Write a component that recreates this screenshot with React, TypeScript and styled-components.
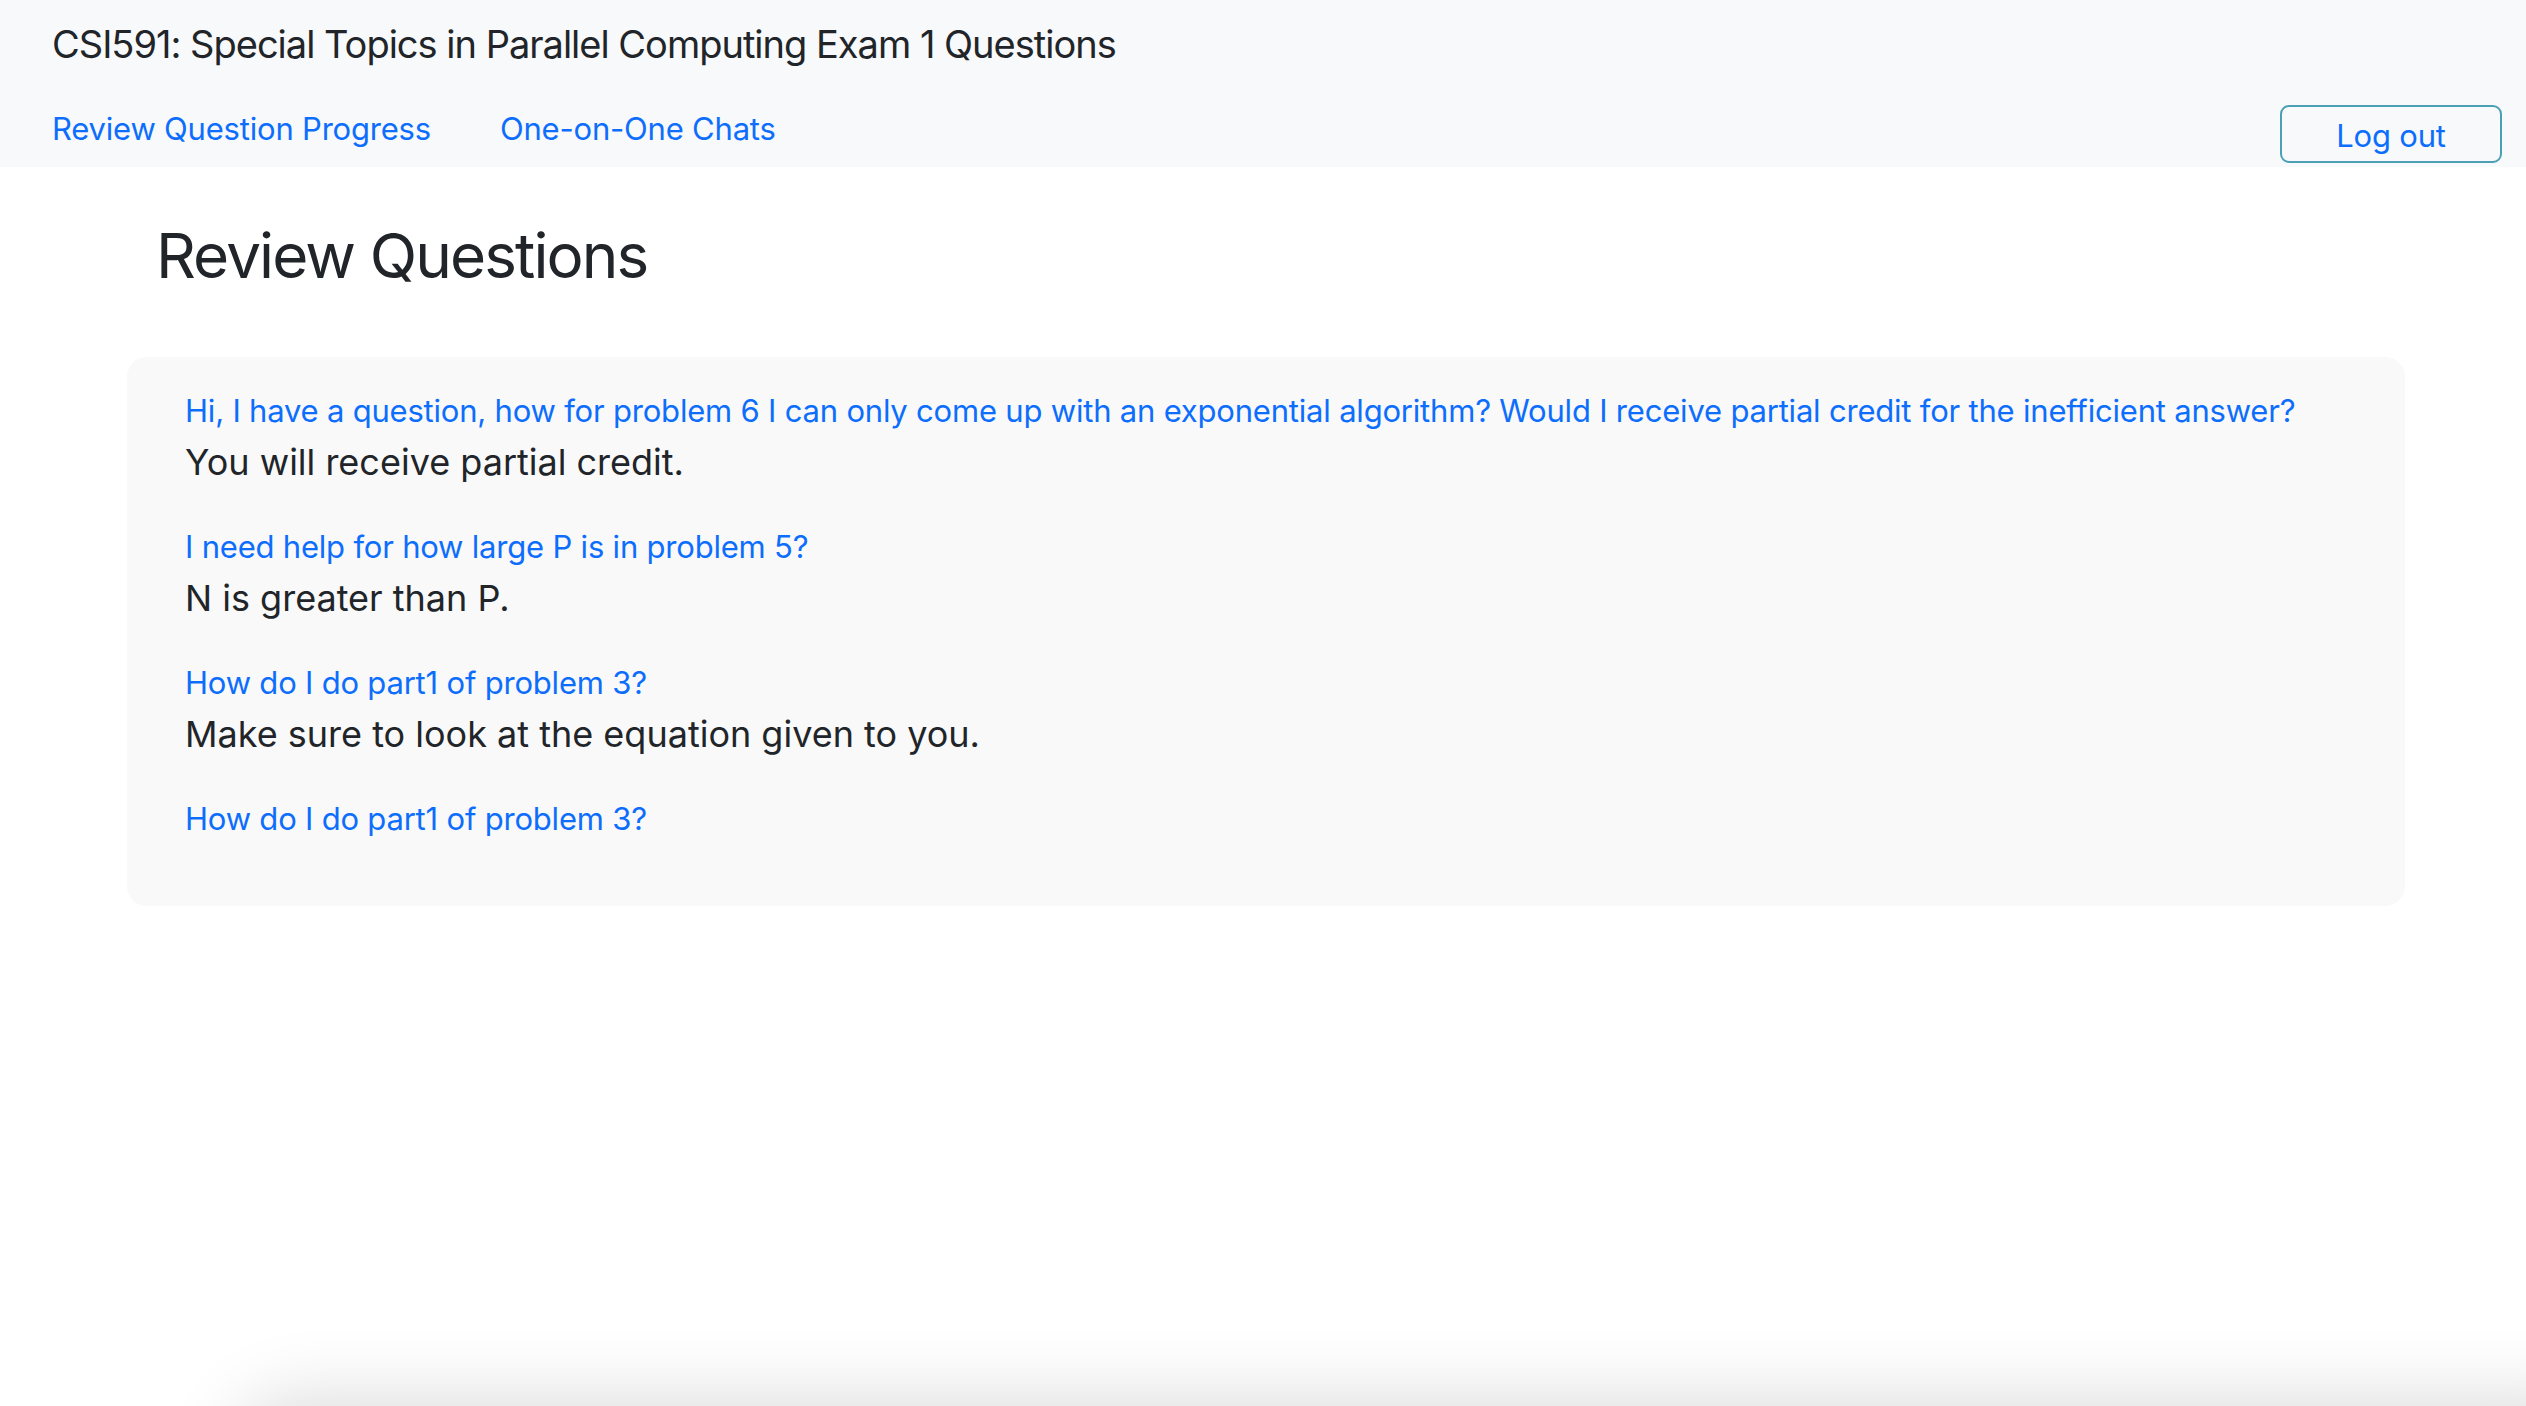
import styled, { createGlobalStyle } from 'styled-components'

const GlobalStyle = createGlobalStyle`
  html, body {
    margin: 0;
    padding: 0;
    background: #ffffff;
    color: #212529;
    font-family: Inter, 'Noto Sans', 'Liberation Sans', sans-serif;
    overflow: hidden;
  }
  * {
    box-sizing: border-box;
  }
`

const Page = styled.div`
  min-height: 1406px;
  display: flex;
  flex-direction: column;
`

const Header = styled.header`
  background: #f8f9fa;
  height: 167px;
  padding: 20px 24px 4px 52px;
  display: flex;
  flex-direction: column;
`

const Brand = styled.div`
  font-size: 38px;
  line-height: 48px;
  color: #212529;
  letter-spacing: -1px;
`

const NavRow = styled.div`
  flex: 1;
  display: flex;
  align-items: flex-end;
`

const NavLinks = styled.nav`
  display: flex;
  gap: 69px;
  padding-bottom: 15px;
`

const NavLink = styled.a`
  font-size: 31px;
  line-height: 38px;
  color: #0d6efd;
  text-decoration: none;
  letter-spacing: -0.2px;
`

const LogoutButton = styled.button`
  margin-left: auto;
  width: 222px;
  height: 58px;
  border: 2px solid #4ba0b4;
  border-radius: 9px;
  background: transparent;
  color: #0d6efd;
  font-family: inherit;
  font-size: 31px;
  letter-spacing: -0.2px;
  padding: 2px 0 0;
`

const Main = styled.main`
  padding: 50px 121px 0 127px;
`

const Heading = styled.h1`
  margin: 0 0 63px 29px;
  font-size: 62px;
  font-weight: 400;
  line-height: 77px;
  letter-spacing: -1.9px;
`

const Card = styled.section`
  background: #f9f9f9;
  border-radius: 20px;
  padding: 34px 58px 68px;
  display: flex;
  flex-direction: column;
  gap: 46px;
`

const Item = styled.div`
  display: flex;
  flex-direction: column;
  gap: 13px;
`

const Question = styled.a`
  font-size: 31px;
  line-height: 39px;
  color: #0d6efd;
  text-decoration: none;
  letter-spacing: -0.2px;
`

const Answer = styled.p`
  margin: 0;
  font-size: 36px;
  line-height: 38px;
  color: #212529;
`

const BottomShade = styled.div`
  position: fixed;
  left: 240px;
  right: -80px;
  top: 1406px;
  height: 120px;
  border-radius: 60px;
  box-shadow: 0 0 70px 12px rgba(0, 0, 0, 0.13);
`

const questions = [
  {
    question:
      'Hi, I have a question, how for problem 6 I can only come up with an exponential algorithm? Would I receive partial credit for the inefficient answer?',
    answer: 'You will receive partial credit.',
  },
  {
    question: 'I need help for how large P is in problem 5?',
    answer: 'N is greater than P.',
  },
  {
    question: 'How do I do part1 of problem 3?',
    answer: 'Make sure to look at the equation given to you.',
  },
  {
    question: 'How do I do part1 of problem 3?',
    answer: '',
  },
]

const App = () => {
  return (
    <Page>
      <GlobalStyle />
      <Header>
        <Brand>CSI591: Special Topics in Parallel Computing Exam 1 Questions</Brand>
        <NavRow>
          <NavLinks>
            <NavLink href="#">Review Question Progress</NavLink>
            <NavLink href="#">One-on-One Chats</NavLink>
          </NavLinks>
          <LogoutButton>Log out</LogoutButton>
        </NavRow>
      </Header>
      <Main>
        <Heading>Review Questions</Heading>
        <Card>
          {questions.map((q, index) => (
            <Item key={index}>
              <Question href="#">{q.question}</Question>
              {q.answer && <Answer>{q.answer}</Answer>}
            </Item>
          ))}
        </Card>
      </Main>
      <BottomShade />
    </Page>
  )
}

export default App
